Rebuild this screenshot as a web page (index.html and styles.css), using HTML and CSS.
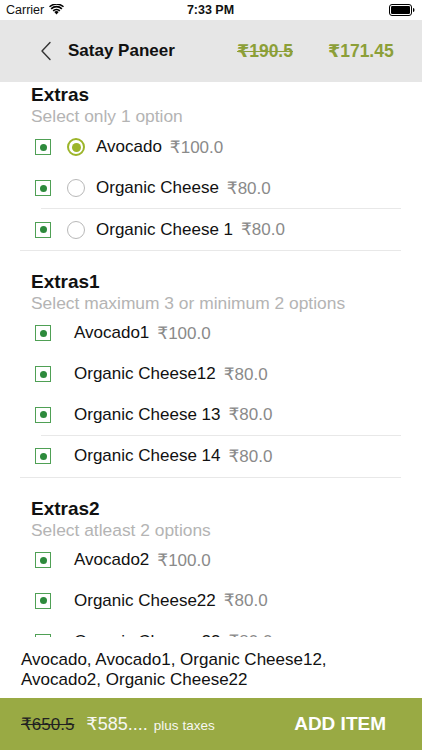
FILE: index.html
```html
<!DOCTYPE html>
<html>
<head>
<meta charset="utf-8">
<link rel="stylesheet" href="styles.css">
</head>
<body>
<div class="screen">
  <div class="status">
    <div class="status-left">
      <span class="carrier">Carrier</span>
      <svg class="wifi" width="15" height="11" viewBox="0 0 15 11">
        <path d="M7.5 10.5 L5.3 8.1 A3.2 3.2 0 0 1 9.7 8.1 Z" fill="#000"/>
        <path d="M3.6 6.3 A5.6 5.6 0 0 1 11.4 6.3 L10.3 7.5 A4 4 0 0 0 4.7 7.5 Z" fill="#000"/>
        <path d="M1.6 4.2 A8.6 8.6 0 0 1 13.4 4.2 L12.3 5.4 A7 7 0 0 0 2.7 5.4 Z" fill="#000"/>
        <path d="M0 2.3 A11 11 0 0 1 15 2.3 L14 3.3 A9.6 9.6 0 0 0 1 3.3 Z" fill="#000"/>
      </svg>
    </div>
    <div class="time">7:33 PM</div>
    <div class="status-right">
      <svg width="26" height="12" viewBox="0 0 26 12">
        <rect x="0.5" y="0.5" width="22" height="11" rx="2.5" fill="none" stroke="#000" stroke-width="1"/>
        <rect x="2" y="2" width="19" height="8" rx="1.2" fill="#000"/>
        <path d="M24 4 Q25.5 4 25.5 6 Q25.5 8 24 8 Z" fill="#000"/>
      </svg>
    </div>
  </div>

  <div class="nav">
    <svg class="back" width="12" height="20" viewBox="0 0 12 20">
      <polyline points="10,1.5 2,10 10,18.5" fill="none" stroke="#333" stroke-width="1.4" stroke-linejoin="round" stroke-linecap="round"/>
    </svg>
    <div class="nav-title">Satay Paneer</div>
    <div class="nav-old">₹190.5</div>
    <div class="nav-new">₹171.45</div>
  </div>

  <div class="scroll">
    <div class="section first">
      <div class="sec-title">Extras</div>
      <div class="sec-sub">Select only 1 option</div>
      <div class="row">
        <span class="check"><span class="dot"></span></span>
        <span class="radio on"><span class="rdot"></span></span>
        <span class="name">Avocado</span><span class="price">₹100.0</span>
      </div>
      <div class="row">
        <span class="check"><span class="dot"></span></span>
        <span class="radio"></span>
        <span class="name">Organic Cheese</span><span class="price">₹80.0</span>
      </div>
      <div class="sep-inset"></div>
      <div class="row">
        <span class="check"><span class="dot"></span></span>
        <span class="radio"></span>
        <span class="name">Organic Cheese 1</span><span class="price">₹80.0</span>
      </div>
      <div class="sep"></div>
    </div>

    <div class="section">
      <div class="sec-title">Extras1</div>
      <div class="sec-sub">Select maximum 3 or minimum 2 options</div>
      <div class="row plain">
        <span class="check"><span class="dot"></span></span>
        <span class="name">Avocado1</span><span class="price">₹100.0</span>
      </div>
      <div class="row plain">
        <span class="check"><span class="dot"></span></span>
        <span class="name">Organic Cheese12</span><span class="price">₹80.0</span>
      </div>
      <div class="row plain">
        <span class="check"><span class="dot"></span></span>
        <span class="name">Organic Cheese 13</span><span class="price">₹80.0</span>
      </div>
      <div class="sep-inset"></div>
      <div class="row plain">
        <span class="check"><span class="dot"></span></span>
        <span class="name">Organic Cheese 14</span><span class="price">₹80.0</span>
      </div>
      <div class="sep"></div>
    </div>

    <div class="section">
      <div class="sec-title">Extras2</div>
      <div class="sec-sub">Select atleast 2 options</div>
      <div class="row plain">
        <span class="check"><span class="dot"></span></span>
        <span class="name">Avocado2</span><span class="price">₹100.0</span>
      </div>
      <div class="row plain">
        <span class="check"><span class="dot"></span></span>
        <span class="name">Organic Cheese22</span><span class="price">₹80.0</span>
      </div>
      <div class="row plain">
        <span class="check"><span class="dot"></span></span>
        <span class="name">Organic Cheese 23</span><span class="price">₹80.0</span>
      </div>
    </div>
  </div>

  <div class="summary">Avocado, Avocado1, Organic Cheese12, Avocado2, Organic Cheese22</div>

  <div class="bottom">
    <div class="bottom-left">
      <span class="b-old">₹650.5</span>
      <span class="b-new">₹585....</span>
      <span class="b-tax">plus taxes</span>
    </div>
    <div class="add">ADD ITEM</div>
  </div>
</div>
</body>
</html>
```

FILE: styles.css
```css
* { box-sizing: border-box; }
html, body { margin: 0; padding: 0; background: #fff; }
body { font-family: "Liberation Sans", Arial, "DejaVu Sans", sans-serif; color: #111; }
.screen { width: 422px; height: 750px; display: flex; flex-direction: column; overflow: hidden; }

.status { height: 20px; display: flex; align-items: center; justify-content: space-between; padding: 0 7px 0 6px; font-size: 12.5px; }
.status-left { display: flex; align-items: center; gap: 5px; width: 110px; }
.carrier { color: #111; }
.wifi { margin-top: -1px; }
.time { font-weight: bold; font-size: 12.5px; }
.status-right { width: 110px; display: flex; justify-content: flex-end; }

.nav { height: 62px; background: #e6e6e6; display: flex; align-items: center; padding-left: 40px; }
.back { margin-right: 16px; }
.nav-title { font-weight: bold; font-size: 17px; color: #111; width: 169px; }
.nav-old { font-weight: bold; font-size: 17.5px; color: #8c9f38; text-decoration: line-through; width: 91px; }
.nav-new { font-weight: bold; font-size: 17.5px; color: #8c9f38; }

.scroll { height: 555px; overflow: hidden; flex: none; }
.section { padding-top: 20px; }
.section.first { padding-top: 2px; }
.sec-title { font-weight: bold; font-size: 19px; line-height: 22px; padding-left: 31px; color: #111; }
.sec-sub { font-size: 17.4px; line-height: 20px; padding-left: 31px; color: #b4b4b4; }
.section.first .sec-sub { line-height: 21px; }

.row { height: 40.7px; display: flex; align-items: center; padding-left: 35px; font-size: 17px; }
.check { width: 16px; height: 16px; border: 1.3px solid #4fa055; display: flex; align-items: center; justify-content: center; flex: none; }
.dot { width: 7px; height: 7px; border-radius: 50%; background: #2d8a3c; }
.radio { width: 18px; height: 18px; border-radius: 50%; border: 1.5px solid #b8b8b8; margin-left: 16px; margin-right: 11px; flex: none; display: flex; align-items: center; justify-content: center; }
.radio.on { border: 2px solid #9cb52a; }
.rdot { width: 9px; height: 9px; border-radius: 50%; background: #9cb52a; }
.row.plain .check { margin-right: 23px; }
.name { color: #111; }
.price { color: #8a8a8a; margin-left: 8px; }

.sep-inset { height: 1px; background: #e8e8e8; margin-left: 41px; margin-right: 21px; }
.sep { height: 1px; background: #e8e8e8; margin-left: 20px; margin-right: 21px; }

.summary { height: 61px; padding: 13px 60px 0 21px; font-size: 17px; line-height: 19.5px; color: #111; flex: none; }

.bottom { height: 52px; background: #99aa44; display: flex; align-items: center; justify-content: space-between; padding: 0 36px 0 21px; flex: none; }
.bottom-left { display: flex; align-items: baseline; }
.b-old { font-size: 17px; color: #222; text-decoration: line-through; margin-right: 12px; }
.b-new { font-size: 18px; color: #f7f7f2; margin-right: 6px; }
.b-tax { font-size: 13.5px; color: #f7f7f2; }
.add { font-weight: bold; font-size: 19px; color: #fff; }
```
